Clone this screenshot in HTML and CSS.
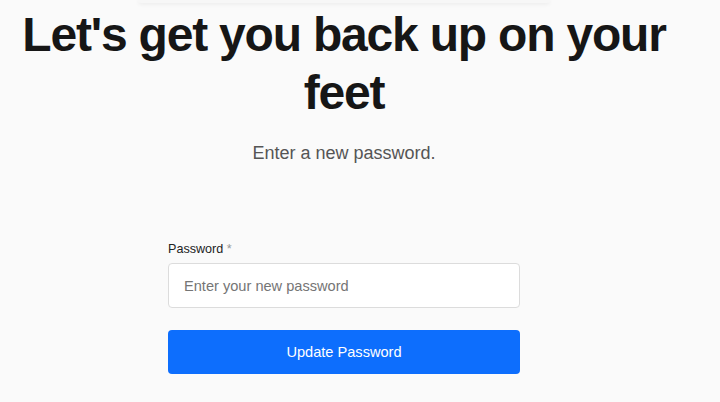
FILE: index.html
```html
<!DOCTYPE html>
<html lang="en">
<head>
<meta charset="utf-8">
<title>Reset password</title>
<link rel="stylesheet" href="styles.css">
</head>
<body>
<div class="page">
  <div class="top-card"></div>
  <h1 class="title">Let's get you back up on your feet</h1>
  <p class="subtitle">Enter a new password.</p>
  <form class="form">
    <label class="label" for="pw">Password <span class="req">*</span></label>
    <input class="input" id="pw" type="password" placeholder="Enter your new password">
    <button class="btn" type="button">Update Password</button>
  </form>
</div>
</body>
</html>
```
FILE: styles.css
```css
html, body {
  margin: 0;
  padding: 0;
  background: #fafafa;
  font-family: "Liberation Sans", Arial, Helvetica, sans-serif;
}
.page {
  width: 688px;
  display: flex;
  flex-direction: column;
  align-items: center;
}
.top-card {
  width: 412px;
  height: 3px;
  background: #f7f7f7;
  border-radius: 0 0 12px 12px;
  box-shadow: 0 1px 4px rgba(0,0,0,0.08);
}
.title {
  margin: 3px 0 0;
  font-size: 48px;
  line-height: 58px;
  font-weight: 700;
  letter-spacing: -1.2px;
  color: #161616;
  text-align: center;
  width: 680px;
}
.subtitle {
  margin: 20px 0 0;
  font-size: 18px;
  line-height: 22px;
  color: #555;
}
.form {
  margin-top: 77px;
  width: 352px;
  display: flex;
  flex-direction: column;
}
.label {
  font-size: 12.6px;
  line-height: 16px;
  color: #222;
}
.req {
  color: #999;
}
.input {
  margin-top: 6px;
  height: 45px;
  box-sizing: border-box;
  border: 1px solid #dcdcdc;
  border-radius: 4px;
  background: #fff;
  padding: 0 15px;
  font-family: inherit;
  font-size: 14.6px;
  color: #333;
}
.input::placeholder {
  color: #757575;
}
.btn {
  margin-top: 22px;
  height: 44px;
  border: none;
  border-radius: 4px;
  background: #0d6efd;
  color: #fff;
  font-family: inherit;
  font-size: 14.6px;
}
```
